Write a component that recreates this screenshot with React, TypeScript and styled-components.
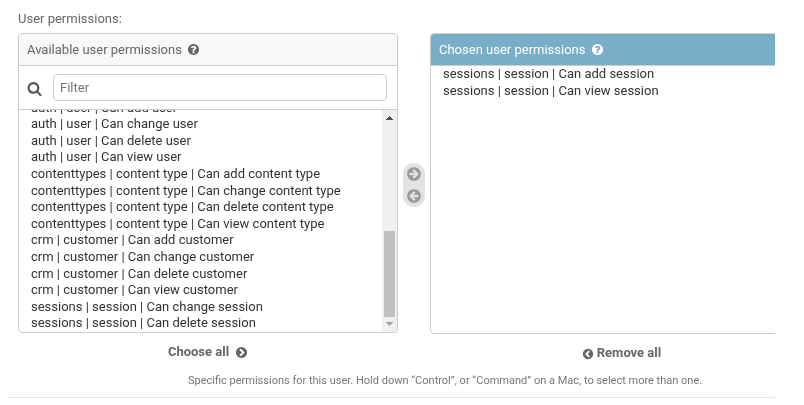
import React from "react";
import styled, { createGlobalStyle } from "styled-components";

const GlobalStyle = createGlobalStyle`
  *, *::before, *::after { box-sizing: border-box; }
  html, body { margin: 0; background: #fff; overflow: hidden; }
  body { font-family: Roboto, "Liberation Sans", sans-serif; font-size: 13px; color: #333; }
`;

const Page = styled.main`
  width: 775px;
  height: 405px;
  overflow: hidden;
  will-change: transform;
`;

const FormRow = styled.section`
  height: 398px;
  margin-left: 8px;
  padding: 11px 0 0 10px;
  border-bottom: 1px solid #e6e6e6;
`;

const FieldLabel = styled.div`
  height: 22px;
  line-height: 16px;
  color: #666;
`;

const Selector = styled.div`
  display: flex;
  width: 800px;
  height: 330px;
`;

const Column = styled.div`
  width: 380px;
  flex: none;
`;

const Panel = styled.div<{ $height: number }>`
  display: flex;
  flex-direction: column;
  height: ${(p) => p.$height}px;
  border: 1px solid #ccc;
  border-radius: 4px;
  overflow: hidden;
`;

const PanelTitle = styled.h2<{ $chosen?: boolean }>`
  display: flex;
  align-items: center;
  flex: none;
  gap: 5px;
  height: 32px;
  margin: 0;
  padding: 0 8px;
  border-bottom: 1px solid #ccc;
  font-size: 13px;
  font-weight: 400;
  color: ${(p) => (p.$chosen ? "#fff" : "#666")};
  background: ${(p) => (p.$chosen ? "#79aec8" : "#f8f8f8")};
`;

const FilterBar = styled.div`
  display: flex;
  align-items: center;
  flex: none;
  gap: 11px;
  height: 44px;
  padding: 0 10px 0 8px;
  border-bottom: 1px solid #ccc;
  color: #555;
`;

const FilterInput = styled.input`
  flex: 1;
  min-width: 0;
  height: 27px;
  padding: 0 6px;
  border: 1px solid #ccc;
  border-radius: 4px;
  outline: none;
  font: inherit;
  &::placeholder { color: #757575; opacity: 1; }
`;

const ListArea = styled.div`
  display: flex;
  flex: 1;
  min-height: 0;
`;

const OptionList = styled.div<{ $scrolled?: boolean }>`
  display: flex;
  flex-direction: column;
  flex: 1;
  min-width: 0;
  overflow: hidden;
  padding: 0 12px;
  justify-content: ${(p) => (p.$scrolled ? "flex-end" : "flex-start")};
`;

const Option = styled.div`
  flex: none;
  height: 16.6px;
  line-height: 16.6px;
  white-space: nowrap;
`;

const Scrollbar = styled.div`
  display: flex;
  flex-direction: column;
  align-items: center;
  justify-content: space-between;
  width: 15px;
  padding: 6px 0 6px;
  background: #f0f0f0;
`;

const Thumb = styled.div`
  width: 11px;
  height: 86px;
  margin: auto 0 5px;
  background: #c1c1c1;
`;

const Chooser = styled.div`
  display: flex;
  flex-direction: column;
  align-items: center;
  flex: none;
  gap: 6px;
  width: 22px;
  height: 44px;
  margin: 130px 5px 0;
  padding-top: 3px;
  border-radius: 11px;
  background: #e2e2e2;
  color: #999;
`;

const BulkAction = styled.div<{ $gap: number; $shift: number }>`
  display: flex;
  align-items: center;
  justify-content: center;
  gap: ${(p) => p.$gap}px;
  height: 16px;
  margin-top: 11px;
  padding-left: ${(p) => p.$shift}px;
  font-weight: 700;
  line-height: 16px;
  color: #666;
`;

const HelpText = styled.p`
  margin: 11px 0 0 170px;
  font-size: 11px;
  line-height: 14px;
  white-space: nowrap;
  color: #777;
`;

const Glyph = styled.svg<{ $size: number; $flip?: boolean; $drop?: number }>`
  display: block;
  flex: none;
  width: ${(p) => p.$size}px;
  height: ${(p) => p.$size}px;
  margin-top: ${(p) => p.$drop ?? 0}px;
  fill: currentColor;
  transform: ${(p) => (p.$flip ? "scaleX(-1)" : "none")};
`;

const DISC =
  "q0 209-103 385.5t-279.5 279.5-385.5 103-385.5-103-279.5-279.5-103-385.5 103-385.5 279.5-279.5 385.5-103 385.5 103 279.5 279.5 103 385.5z";

const glyphs = {
  help:
    "M1024 1376v-192q0-14-9-23t-23-9h-192q-14 0-23 9t-9 23v192q0 14 9 23t23 9h192q14 0 23-9t9-23zm256-672q0-88-55.5-163t-138.5-116-170-41q-243 0-371 213-15 24 8 42l132 100q7 6 19 6 16 0 25-12 53-68 86-92 34-24 86-24 48 0 85.5 26t37.5 59q0 38-20 61t-68 45q-63 28-115.5 86.5t-52.5 125.5v36q0 14 9 23t23 9h192q14 0 23-9t9-23q0-19 21.5-49.5t54.5-49.5q32-18 49-28.5t46-35 44.5-48 28-60.5 12.5-81zm384 192" +
    DISC,
  search:
    "M1216 832q0-185-131.5-316.5t-316.5-131.5-316.5 131.5-131.5 316.5 131.5 316.5 316.5 131.5 316.5-131.5 131.5-316.5zm512 832q0 52-38 90t-90 38q-54 0-90-38l-343-342q-179 124-399 124-143 0-273.5-55.5t-225-150-150-225-55.5-273.5 55.5-273.5 150-225 225-150 273.5-55.5 273.5 55.5 225 150 150 225 55.5 273.5q0 220-124 399l343 343q37 37 37 90z",
  arrow:
    "M1413 896q0-27-18-45l-91-91-362-362q-18-18-45-18t-45 18l-91 91q-18 18-18 45t18 45l189 189h-502q-26 0-45 19t-19 45v128q0 26 19 45t45 19h502l-189 189q-18 18-18 45t18 45l91 91q18 18 45 18t45-18l362-362 91-91q18-18 18-45zm251 0" +
    DISC,
  chevron:
    "M845 1395l454-454q19-19 19-45t-19-45l-454-454q-19-19-45-19t-45 19l-102 102q-19 19-19 45t19 45l307 307-307 307q-19 19-19 45t19 45l102 102q19 19 45 19t45-19zm819-499" +
    DISC,
};

type IconProps = { name: keyof typeof glyphs; size: number; flip?: boolean; drop?: number };

const Icon = ({ name, size, flip, drop }: IconProps) => (
  <Glyph viewBox="0 0 1792 1792" $size={size} $flip={flip} $drop={drop} aria-hidden="true">
    <path d={glyphs[name]} />
  </Glyph>
);

const ScrollArrow = ({ down }: { down?: boolean }) => (
  <svg width="7" height="4" viewBox="0 0 7 4" shapeRendering="crispEdges" aria-hidden="true">
    {down ? (
      <path fill="#a3a3a3" d="M0 0h7v1H0zM1 1h5v1H1zM2 2h3v1H2zM3 3h1v1H3z" />
    ) : (
      <path fill="#505050" d="M3 0h1v1H3zM2 1h3v1H2zM1 2h5v1H1zM0 3h7v1H0z" />
    )}
  </svg>
);

const available = [
  "auth | user | Can add user",
  "auth | user | Can change user",
  "auth | user | Can delete user",
  "auth | user | Can view user",
  "contenttypes | content type | Can add content type",
  "contenttypes | content type | Can change content type",
  "contenttypes | content type | Can delete content type",
  "contenttypes | content type | Can view content type",
  "crm | customer | Can add customer",
  "crm | customer | Can change customer",
  "crm | customer | Can delete customer",
  "crm | customer | Can view customer",
  "sessions | session | Can change session",
  "sessions | session | Can delete session",
];

const chosen = ["sessions | session | Can add session", "sessions | session | Can view session"];

export default function App() {
  return (
    <>
      <GlobalStyle />
      <Page>
        <FormRow>
          <FieldLabel>User permissions:</FieldLabel>
          <Selector>
            <Column>
              <Panel $height={300}>
                <PanelTitle>
                  Available user permissions <Icon name="help" size={13} />
                </PanelTitle>
                <FilterBar>
                  <Icon name="search" size={15} drop={1} />
                  <FilterInput placeholder="Filter" />
                </FilterBar>
                <ListArea>
                  <OptionList $scrolled>
                    {available.map((text) => (
                      <Option key={text}>{text}</Option>
                    ))}
                  </OptionList>
                  <Scrollbar>
                    <ScrollArrow />
                    <Thumb />
                    <ScrollArrow down />
                  </Scrollbar>
                </ListArea>
              </Panel>
              <BulkAction $gap={6} $shift={0}>
                Choose all <Icon name="chevron" size={13} drop={1} />
              </BulkAction>
            </Column>
            <Chooser>
              <Icon name="arrow" size={16} />
              <Icon name="arrow" size={16} flip />
            </Chooser>
            <Column>
              <Panel $height={301}>
                <PanelTitle $chosen>
                  Chosen user permissions <Icon name="help" size={13} />
                </PanelTitle>
                <ListArea>
                  <OptionList>
                    {chosen.map((text) => (
                      <Option key={text}>{text}</Option>
                    ))}
                  </OptionList>
                </ListArea>
              </Panel>
              <BulkAction $gap={3} $shift={3}>
                <Icon name="chevron" size={12} flip drop={2} /> Remove all
              </BulkAction>
            </Column>
          </Selector>
          <HelpText>
            Specific permissions for this user. Hold down “Control”, or “Command” on a Mac, to select more than one.
          </HelpText>
        </FormRow>
      </Page>
    </>
  );
}
